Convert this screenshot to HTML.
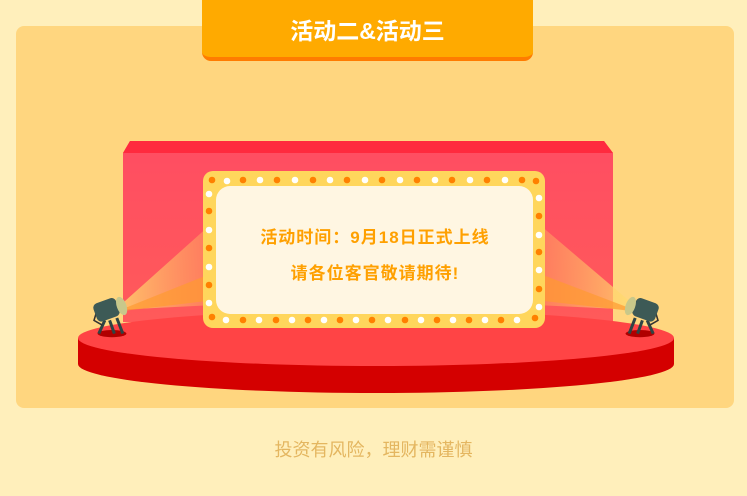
<!DOCTYPE html>
<html><head><meta charset="utf-8"><style>
html,body{margin:0;padding:0;}
body{width:747px;height:496px;background:#ffefbb;position:relative;overflow:hidden;font-family:"Liberation Sans","Noto Sans CJK SC",sans-serif;}
.panel{position:absolute;left:16px;top:26px;width:718px;height:382px;background:#ffd67f;border-radius:8px;}
.tab{position:absolute;left:202px;top:0;width:331px;height:57px;background:#ffaa00;border-radius:0 0 9px 9px;border-bottom:4px solid #ff7c00;color:#fff;font-weight:bold;font-size:23px;text-align:center;line-height:62px;}
.foot{position:absolute;left:0;width:747px;top:436px;text-align:center;color:#e4b660;font-size:18px;}
.txt{position:absolute;left:216px;width:318px;text-align:center;color:#ffa000;font-size:17px;letter-spacing:1px;font-weight:bold;}
</style></head><body>
<div class="panel"></div>
<div class="tab">活动二&amp;活动三</div>
<svg style="position:absolute;left:0;top:0" width="747" height="496">
<defs>
<linearGradient id="wall" x1="0" y1="0" x2="0" y2="1"><stop offset="0" stop-color="#ff4d62"/><stop offset="1" stop-color="#ff5a5a"/></linearGradient>
<linearGradient id="beamL" x1="0" y1="0" x2="1" y2="0"><stop offset="0" stop-color="#ffe070" stop-opacity=".95"/><stop offset="1" stop-color="#ffb060" stop-opacity=".45"/></linearGradient>
<linearGradient id="beamR" x1="1" y1="0" x2="0" y2="0"><stop offset="0" stop-color="#ffe070" stop-opacity=".95"/><stop offset="1" stop-color="#ffb060" stop-opacity=".45"/></linearGradient>
</defs>
<polygon points="130,141 604,141 613,153 613,322 123,322 123,153" fill="url(#wall)"/>
<polygon points="130,141 604,141 613,153 123,153" fill="#ff2a3e"/>
<ellipse cx="376" cy="364" rx="298" ry="29" fill="#d40000"/>
<rect x="78" y="338" width="596" height="26" fill="#d40000"/>
<ellipse cx="376" cy="338" rx="298" ry="28" fill="#ff4445"/>
<polygon points="115,310 210,225 215,305" fill="url(#beamL)" opacity=".85"/>
<polygon points="115,312 215,272 215,300" fill="#ff9a30" opacity=".7"/>
<polygon points="640,310 540,225 535,305" fill="url(#beamR)" opacity=".85"/>
<polygon points="640,312 535,272 535,300" fill="#ff9a30" opacity=".7"/>
<rect x="203" y="171" width="342" height="157" rx="10" fill="#ffd65c"/>
<rect x="216" y="186" width="317" height="128" rx="14" fill="#fff6e2"/>
<g transform="translate(112,318) scale(1.2)">
<ellipse cx="0" cy="13" rx="12" ry="3" fill="#b00000"/>
<path d="M-6,2 L-11,13 M-2,2 L2,13 M4,0 L9,13" stroke="#2f4545" stroke-width="2.5"/>
<path d="M-12,-8 L-15,2 L-8,6" stroke="#333" stroke-width="1.3" fill="none"/>
<rect x="-12" y="-16" width="20" height="16" rx="4" fill="#3d5a56" transform="rotate(-20)"/>
<ellipse cx="8" cy="-10" rx="4" ry="8" fill="#c8c88a" transform="rotate(-20 8 -10)"/>
</g>
<g transform="translate(640,318) scale(-1.2,1.2)">
<ellipse cx="0" cy="13" rx="12" ry="3" fill="#b00000"/>
<path d="M-6,2 L-11,13 M-2,2 L2,13 M4,0 L9,13" stroke="#2f4545" stroke-width="2.5"/>
<path d="M-12,-8 L-15,2 L-8,6" stroke="#333" stroke-width="1.3" fill="none"/>
<rect x="-12" y="-16" width="20" height="16" rx="4" fill="#3d5a56" transform="rotate(-20)"/>
<ellipse cx="8" cy="-10" rx="4" ry="8" fill="#c8c88a" transform="rotate(-20 8 -10)"/>
</g>
<g>
<circle cx="212" cy="180" r="3.3" fill="#ff8000"/><circle cx="227" cy="181" r="3.3" fill="#fff"/><circle cx="243" cy="180" r="3.3" fill="#ff8000"/><circle cx="260" cy="180" r="3.3" fill="#fff"/><circle cx="277" cy="180" r="3.3" fill="#ff8000"/><circle cx="295" cy="180" r="3.3" fill="#fff"/><circle cx="313" cy="180" r="3.3" fill="#ff8000"/><circle cx="330" cy="180" r="3.3" fill="#fff"/><circle cx="347" cy="180" r="3.3" fill="#ff8000"/><circle cx="365" cy="180" r="3.3" fill="#fff"/><circle cx="382" cy="180" r="3.3" fill="#ff8000"/><circle cx="400" cy="180" r="3.3" fill="#fff"/><circle cx="417" cy="180" r="3.3" fill="#ff8000"/><circle cx="435" cy="180" r="3.3" fill="#fff"/><circle cx="452" cy="180" r="3.3" fill="#ff8000"/><circle cx="470" cy="180" r="3.3" fill="#fff"/><circle cx="487" cy="180" r="3.3" fill="#ff8000"/><circle cx="505" cy="180" r="3.3" fill="#fff"/><circle cx="522" cy="180" r="3.3" fill="#ff8000"/><circle cx="536" cy="181" r="3.3" fill="#ff8000"/>
<circle cx="212" cy="317" r="3.3" fill="#ff8000"/><circle cx="226" cy="320" r="3.3" fill="#fff"/><circle cx="243" cy="320" r="3.3" fill="#ff8000"/><circle cx="259" cy="320" r="3.3" fill="#fff"/><circle cx="276" cy="320" r="3.3" fill="#ff8000"/><circle cx="292" cy="320" r="3.3" fill="#fff"/><circle cx="308" cy="320" r="3.3" fill="#ff8000"/><circle cx="324" cy="320" r="3.3" fill="#fff"/><circle cx="340" cy="320" r="3.3" fill="#ff8000"/><circle cx="356" cy="320" r="3.3" fill="#fff"/><circle cx="372" cy="320" r="3.3" fill="#ff8000"/><circle cx="388" cy="320" r="3.3" fill="#fff"/><circle cx="405" cy="320" r="3.3" fill="#ff8000"/><circle cx="421" cy="320" r="3.3" fill="#fff"/><circle cx="437" cy="320" r="3.3" fill="#ff8000"/><circle cx="453" cy="320" r="3.3" fill="#fff"/><circle cx="469" cy="320" r="3.3" fill="#ff8000"/><circle cx="485" cy="320" r="3.3" fill="#fff"/><circle cx="501" cy="320" r="3.3" fill="#ff8000"/><circle cx="517" cy="320" r="3.3" fill="#fff"/><circle cx="535" cy="318" r="3.3" fill="#ff8000"/>
<circle cx="209" cy="194" r="3.3" fill="#fff"/><circle cx="209" cy="211" r="3.3" fill="#ff8000"/><circle cx="209" cy="230" r="3.3" fill="#fff"/><circle cx="209" cy="248" r="3.3" fill="#ff8000"/><circle cx="209" cy="267" r="3.3" fill="#fff"/><circle cx="209" cy="285" r="3.3" fill="#ff8000"/><circle cx="209" cy="303" r="3.3" fill="#fff"/>
<circle cx="539" cy="198" r="3.3" fill="#fff"/><circle cx="539" cy="216" r="3.3" fill="#ff8000"/><circle cx="539" cy="235" r="3.3" fill="#fff"/><circle cx="539" cy="252" r="3.3" fill="#ff8000"/><circle cx="539" cy="270" r="3.3" fill="#fff"/><circle cx="539" cy="289" r="3.3" fill="#ff8000"/><circle cx="539" cy="307" r="3.3" fill="#fff"/>
</g>
</svg>
<div class="txt" style="top:223px">活动时间：9月18日正式上线</div>
<div class="txt" style="top:259px">请各位客官敬请期待!</div>
<div class="foot">投资有风险，理财需谨慎</div>
</body></html>
